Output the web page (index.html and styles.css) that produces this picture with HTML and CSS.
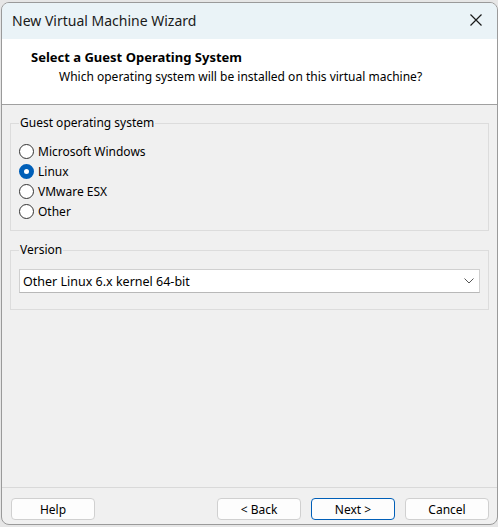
FILE: index.html
```html
<!DOCTYPE html>
<html>
<head>
<meta charset="utf-8">
<link rel="stylesheet" href="styles.css">
</head>
<body>
<div class="window">
  <div class="titlebar">
    <span class="title">New Virtual Machine Wizard</span>
    <svg class="close" width="12" height="12" viewBox="0 0 12 12"><path d="M0.5 0.5 L11.5 11.5 M11.5 0.5 L0.5 11.5" stroke="#1a1a1a" stroke-width="1.2" fill="none"/></svg>
  </div>
  <div class="header">
    <div class="h-title">Select a Guest Operating System</div>
    <div class="h-sub">Which operating system will be installed on this virtual machine?</div>
  </div>
  <div class="body">
    <fieldset class="group os">
      <legend>Guest operating system</legend>
      <label class="radio"><span class="dot"></span>Microsoft Windows</label>
      <label class="radio"><span class="dot on"></span>Linux</label>
      <label class="radio"><span class="dot"></span>VMware ESX</label>
      <label class="radio"><span class="dot"></span>Other</label>
    </fieldset>
    <fieldset class="group ver">
      <legend>Version</legend>
      <div class="select">
        <span>Other Linux 6.x kernel 64-bit</span>
        <svg width="10" height="6" viewBox="0 0 10 6"><path d="M0.5 0.5 L5 5 L9.5 0.5" stroke="#555" stroke-width="1" fill="none"/></svg>
      </div>
    </fieldset>
  </div>
  <div class="footer">
    <button class="btn">Help</button>
    <div class="spacer"></div>
    <button class="btn">&lt; Back</button>
    <button class="btn primary">Next &gt;</button>
    <button class="btn">Cancel</button>
  </div>
</div>
</body>
</html>
```
FILE: styles.css
```css
html, body {
  margin: 0;
  padding: 0;
  background: #e6e6e6;
  width: 498px;
  height: 527px;
  overflow: hidden;
}
body {
  font-family: "Noto Sans", "Open Sans", sans-serif;
  font-size: 12px;
  color: #000;
}
.window {
  margin: 2px 0 0 1px;
  width: 497px;
  height: 523px;
  box-sizing: border-box;
  border: 1px solid #9a9a9a;
  border-radius: 8px;
  background: #f0f0f0;
  overflow: hidden;
  display: flex;
  flex-direction: column;
}
.titlebar {
  height: 36px;
  background: #eaf3f7;
  display: flex;
  align-items: center;
  justify-content: space-between;
  padding: 0 15px 0 10px;
  flex: none;
}
.title {
  font-size: 14px;
  color: #1a1a1a;
  position: relative;
  top: -1px;
}
.close { position: relative; top: -1px; }
.header {
  height: 66px;
  background: #fff;
  border-bottom: 1px solid #a0a0a0;
  box-sizing: border-box;
  padding: 9px 0 0 29px;
  flex: none;
}
.h-title {
  font-weight: bold;
  font-size: 13px;
  color: #000;
  line-height: 18px;
}
.h-sub {
  margin-left: 28px;
  margin-top: 2px;
  line-height: 18px;
  color: #000;
}
.body {
  flex: 1;
  padding: 10px 8px 0 8px;
  display: flex;
  flex-direction: column;
  gap: 11px;
  border-bottom: 1px solid #d9d9d9;
}
.group {
  margin: 0;
  border: 1px solid #dcdcdc;
  padding: 0 8px;
  min-width: 0;
}
.group legend {
  padding: 0 1px;
  margin-left: 0;
  line-height: 16px;
}
.os { padding-top: 10px; padding-bottom: 9px; }
.radio {
  display: flex;
  align-items: center;
  height: 20px;
  gap: 4px;
}
.dot {
  width: 15px;
  height: 15px;
  border: 1px solid #333;
  border-radius: 50%;
  background: #fff;
  box-sizing: border-box;
  flex: none;
}
.dot.on {
  border: 5px solid #005fb8;
  background: #fff;
}
.ver { padding-top: 11px; padding-bottom: 16px; }
.select {
  height: 24px;
  box-sizing: border-box;
  background: #fff;
  border: 1px solid #d0d0d0;
  border-bottom-color: #b8b8b8;
  display: flex;
  align-items: center;
  justify-content: space-between;
  padding: 0 5px 0 3px;
  font-size: 12.5px;
}
.footer {
  height: 36px;
  flex: none;
  display: flex;
  align-items: flex-start;
  padding: 10px 8px 0 9px;
  box-sizing: border-box;
  gap: 10px;
}
.spacer { flex: 1; }
.btn {
  width: 84px;
  height: 22px;
  background: #fdfdfd;
  border: 1px solid #d0d0d0;
  border-radius: 4px;
  font-family: inherit;
  font-size: 12px;
  color: #000;
  padding: 0;
}
.btn.primary {
  border-color: #005fb8;
}
```
